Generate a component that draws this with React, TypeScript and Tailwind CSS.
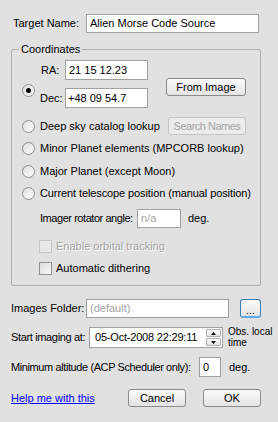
import React from 'react'

const font = { fontFamily: '"Liberation Sans", Arial, sans-serif' }

function Radio({ checked }: { checked?: boolean }) {
    return (
        <span className="flex items-center justify-center w-[13px] h-[13px] shrink-0 rounded-full border border-[#8f8f8f] bg-gradient-to-br from-[#dcdcdc] to-[#ffffff]">
            {checked && <span className="block w-[5px] h-[5px] rounded-full bg-black" />}
        </span>
    )
}

function Check({ disabled }: { disabled?: boolean }) {
    return (
        <span
            className={
                disabled
                    ? "block w-[13px] h-[13px] shrink-0 border border-[#c4c4c4] bg-[#e8e8e8]"
                    : "block w-[13px] h-[13px] shrink-0 border border-[#8f8f8f] bg-gradient-to-br from-[#dcdcdc] to-[#f8f8f8]"
            }
        />
    )
}

function Button({ label, w, disabled }: { label: string; w: string; disabled?: boolean }) {
    return (
        <div
            className={
                disabled
                    ? `${w} h-[18px] shrink-0 whitespace-nowrap tracking-[-0.5px] flex items-center justify-center rounded-[3px] border border-[#c4c4c4] bg-[#ececec] text-[#a3a3a3]`
                    : `${w} h-[18px] shrink-0 whitespace-nowrap flex items-center justify-center rounded-[3px] border border-[#8a8a8a] bg-gradient-to-b from-[#fbfbfb] to-[#e4e4e4] text-black`
            }
        >
            {label}
        </div>
    )
}

export default function App() {
    return (
        <div style={font} className="w-[278px] h-[422px] bg-[#e1e1e1] text-[11px] leading-[13px] text-black pt-[14px] overflow-hidden whitespace-nowrap">
            {/* target name */}
            <div className="flex items-center h-[19px] pl-[13px]">
                <span className="w-[73px] shrink-0">Target Name:</span>
                <div className="w-[173px] h-[19px] shrink-0 border border-[#a0a0a0] bg-white flex items-center pl-[3px]">Alien Morse Code Source</div>
            </div>

            {/* coordinates group */}
            <div className="ml-[11px] mt-[16px] w-[250px] h-[237px] border border-[#b0b0b0] rounded-[2px]">
                <div className="-mt-[7px] ml-[7px] px-[2px] w-fit bg-[#e1e1e1]">Coordinates</div>

                <div className="flex mt-[4px] pl-[10px]">
                    <div className="mt-[24px]"><Radio checked /></div>
                    <div className="flex flex-col gap-[8px] ml-[5px]">
                        <div className="flex items-center h-[20px]">
                            <span className="w-[25px] shrink-0 pl-[1px]">RA:</span>
                            <div className="w-[83px] h-[20px] shrink-0 border border-[#a0a0a0] bg-white flex items-center pl-[3px]">21 15 12.23</div>
                        </div>
                        <div className="flex items-center h-[20px]">
                            <span className="w-[25px] shrink-0">Dec:</span>
                            <div className="w-[83px] h-[20px] shrink-0 border border-[#a0a0a0] bg-white flex items-center pl-[2px]">+48 09 54.7</div>
                        </div>
                    </div>
                    <div className="ml-[18px] mt-[18px]">
                        <Button label="From Image" w="w-[80px]" />
                    </div>
                </div>

                <div className="flex items-center h-[18px] mt-[9px] pl-[10px]">
                    <Radio />
                    <span className="w-[128px] shrink-0 ml-[5px]">Deep sky catalog lookup</span>
                    <Button label="Search Names" w="w-[78px]" disabled />
                </div>

                <div className="flex items-center h-[22px] mt-[2px] pl-[10px]">
                    <Radio />
                    <span className="ml-[5px]">Minor Planet elements (MPCORB lookup)</span>
                </div>
                <div className="flex items-center h-[22px] mt-[1px] pl-[10px]">
                    <Radio />
                    <span className="ml-[5px]">Major Planet (except Moon)</span>
                </div>
                <div className="flex items-center h-[22px] pl-[10px]">
                    <Radio />
                    <span className="ml-[5px] tracking-[-0.1px]">Current telescope position (manual position)</span>
                </div>

                <div className="flex items-center h-[19px] mt-[5px] pl-[28px]">
                    <span className="w-[97px] shrink-0 tracking-[-0.45px]">Imager rotator angle:</span>
                    <div className="w-[44px] h-[19px] shrink-0 border border-[#a0a0a0] bg-white flex items-center pl-[3px] text-[#a3a3a3]">n/a</div>
                    <span className="ml-[7px]">deg.</span>
                </div>

                <div className="flex items-center h-[13px] mt-[12px] pl-[27px]">
                    <Check disabled />
                    <span className="ml-[4px] text-[#a3a3a3] [text-shadow:1px_1px_0_#ffffff]">Enable orbital tracking</span>
                </div>
                <div className="flex items-center h-[13px] mt-[9px] pl-[27px]">
                    <Check />
                    <span className="ml-[4px]">Automatic dithering</span>
                </div>
            </div>

            {/* images folder */}
            <div className="flex items-center h-[19px] mt-[13px] pl-[11px]">
                <span className="w-[75px] shrink-0">Images Folder:</span>
                <div className="w-[143px] h-[19px] shrink-0 border border-[#a0a0a0] bg-white flex items-center pl-[3px] text-[#a3a3a3]">(default)</div>
                <div className="ml-[11px] w-[21px] h-[19px] shrink-0 rounded-[3px] border border-[#3c7fb1] border-b-2 border-b-[#5aa9e6] bg-gradient-to-b from-[#fbfbfb] to-[#e4e4e4] flex items-end justify-center pb-[2px] leading-[8px]">...</div>
            </div>

            {/* start imaging */}
            <div className="flex items-center h-[21px] mt-[9px] pl-[11px]">
                <span className="w-[78px] shrink-0 tracking-[-0.35px]">Start imaging at:</span>
                <div className="w-[134px] h-[21px] shrink-0 border border-[#a0a0a0] bg-white flex items-center pl-[5px] pr-[1px]">
                    <span className="flex-1 tracking-[-0.2px]">05-Oct-2008 22:29:11</span>
                    <div className="flex flex-col gap-[1px]">
                        <div className="w-[15px] h-[8px] border border-[#b0b0b0] rounded-[1px] bg-gradient-to-b from-[#fafafa] to-[#e2e2e2] flex items-center justify-center">
                            <svg width="5" height="3" viewBox="0 0 5 3"><path d="M2.5 0L5 3H0z" fill="#000" /></svg>
                        </div>
                        <div className="w-[15px] h-[8px] border border-[#b0b0b0] rounded-[1px] bg-gradient-to-b from-[#fafafa] to-[#e2e2e2] flex items-center justify-center">
                            <svg width="5" height="3" viewBox="0 0 5 3"><path d="M0 0H5L2.5 3z" fill="#000" /></svg>
                        </div>
                    </div>
                </div>
                <div className="ml-[5px] text-[10px] leading-[11px] -mt-[1px]">
                    <div>Obs. local</div>
                    <div>time</div>
                </div>
            </div>

            {/* min altitude */}
            <div className="flex items-center h-[20px] mt-[9px] pl-[11px]">
                <span className="w-[188px] shrink-0 tracking-[-0.4px]">Minimum altitude (ACP Scheduler only):</span>
                <div className="w-[22px] h-[20px] shrink-0 border border-[#a0a0a0] bg-white flex items-center pl-[3px]">0</div>
                <span className="ml-[8px]">deg.</span>
            </div>

            {/* footer */}
            <div className="flex items-center h-[18px] mt-[12px] pl-[11px]">
                <a href="#" className="w-[117px] shrink-0 text-[#0000ff] underline">Help me with this</a>
                <Button label="Cancel" w="w-[58px]" />
                <div className="ml-[17px]">
                    <Button label="OK" w="w-[58px]" />
                </div>
            </div>
        </div>
    )
}
